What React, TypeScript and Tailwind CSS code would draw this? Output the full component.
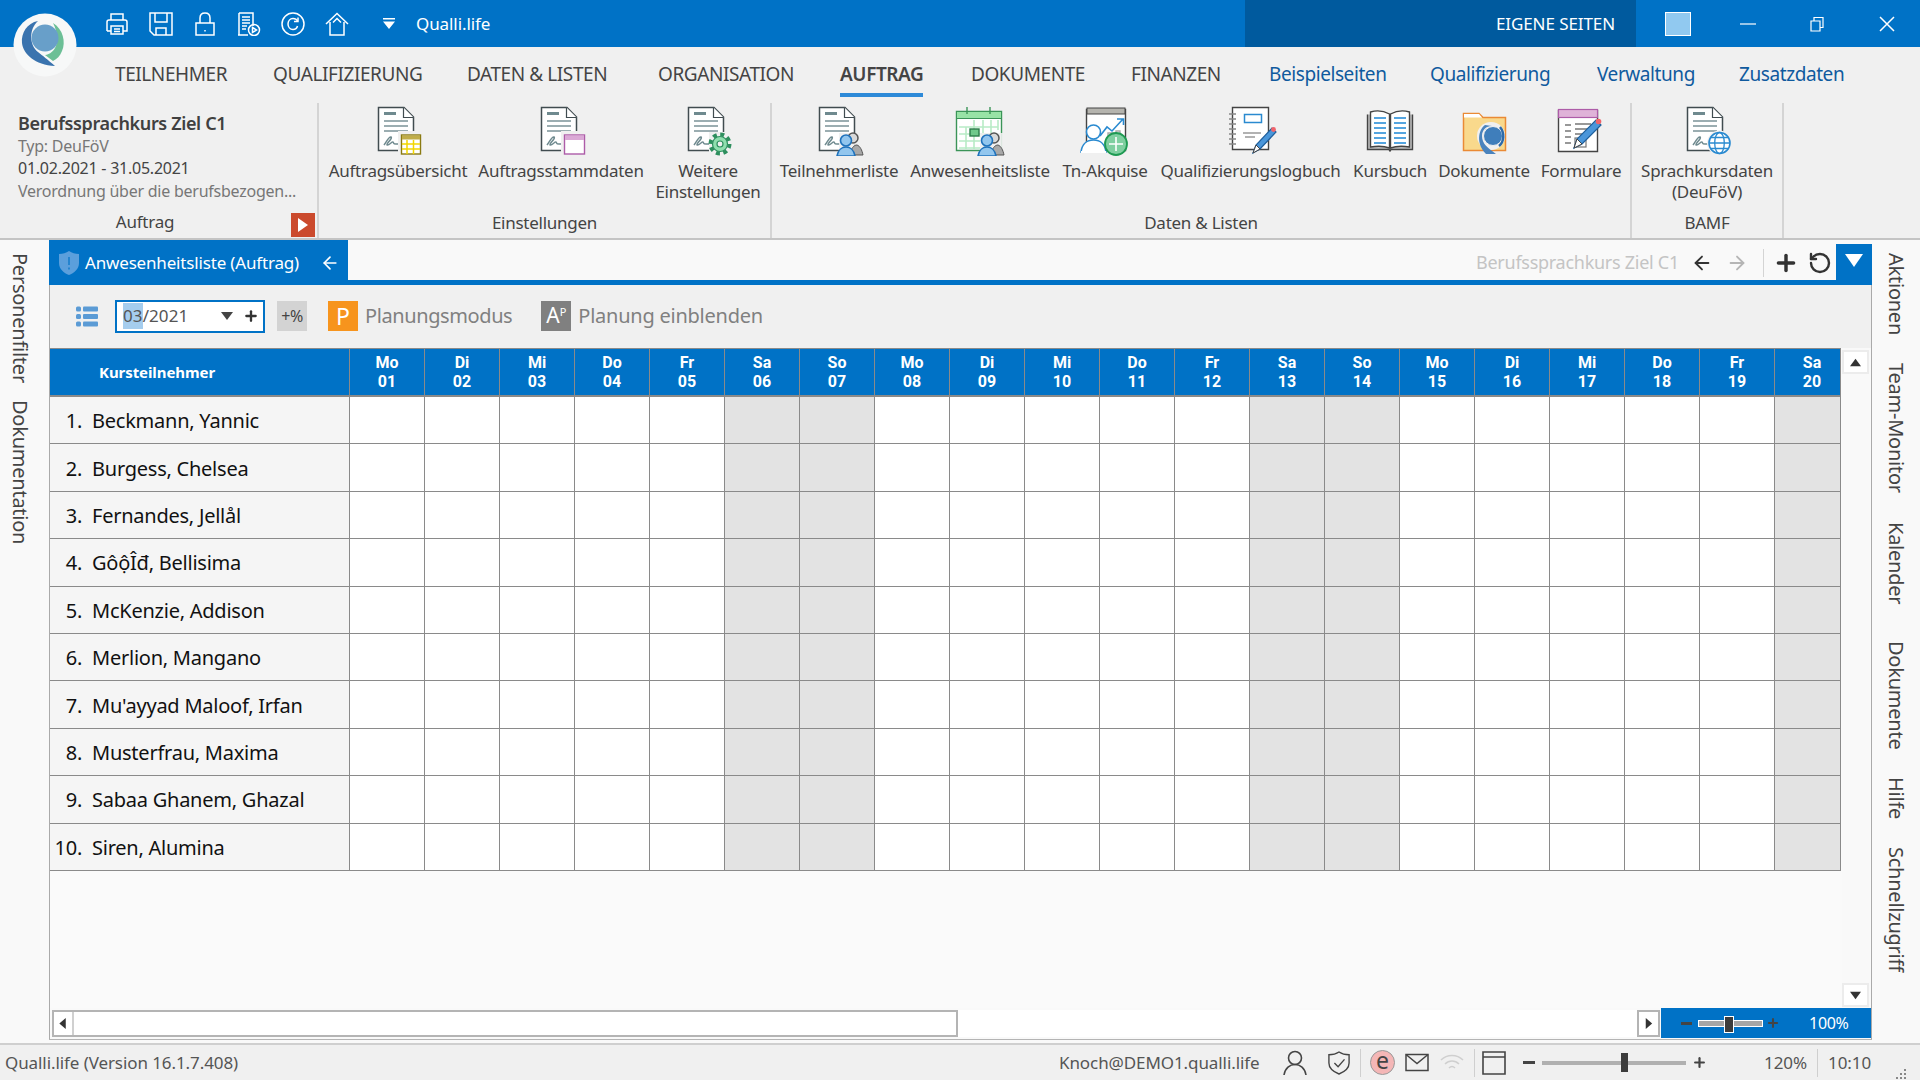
import type { ReactNode } from 'react';
import { ArrowLeft, ArrowRight, Plus, RotateCcw } from 'lucide-react';

const FONT = "font-['Noto_Sans','Open_Sans',sans-serif]";

const mainTabs = [
    { label: 'TEILNEHMER', w: 'w-[158px]' },
    { label: 'QUALIFIZIERUNG', w: 'w-[194px]' },
    { label: 'DATEN & LISTEN', w: 'w-[191px]' },
    { label: 'ORGANISATION', w: 'w-[182px]' },
    { label: 'AUFTRAG', w: 'w-[131px]', active: true },
    { label: 'DOKUMENTE', w: 'w-[160px]' },
    { label: 'FINANZEN', w: 'w-[138px]' },
    { label: 'Beispielseiten', w: 'w-[161px]', link: true },
    { label: 'Qualifizierung', w: 'w-[167px]', link: true },
    { label: 'Verwaltung', w: 'w-[142px]', link: true },
    { label: 'Zusatzdaten', w: 'w-[110px]', link: true },
];

const names = [
    'Beckmann, Yannic',
    'Burgess, Chelsea',
    'Fernandes, Jellål',
    'GôộÎđ, Bellisima',
    'McKenzie, Addison',
    'Merlion, Mangano',
    "Mu'ayyad Maloof, Irfan",
    'Musterfrau, Maxima',
    'Sabaa Ghanem, Ghazal',
    'Siren, Alumina',
];

const dayNames = ['Mo', 'Di', 'Mi', 'Do', 'Fr', 'Sa', 'So'];
const days = Array.from({ length: 20 }, (_, i) => ({
    name: dayNames[i % 7],
    num: String(i + 1).padStart(2, '0'),
    weekend: i % 7 >= 5,
}));

const leftRail = [
    { label: 'Personenfilter', h: 'h-[147px]' },
    { label: 'Dokumentation', h: 'h-[150px]' },
];

const rightRail = [
    { label: 'Aktionen', h: 'h-[110px]' },
    { label: 'Team-Monitor', h: 'h-[159px]' },
    { label: 'Kalender', h: 'h-[119px]' },
    { label: 'Dokumente', h: 'h-[136px]' },
    { label: 'Hilfe', h: 'h-[70px]' },
    { label: 'Schnellzugriff', h: 'h-[130px]' },
];

function Logo() {
    return (
        <svg viewBox="0 0 64 64" className="h-[64px] w-[64px]">
            <circle cx="32" cy="32" r="31.5" fill="#f7f8f8" />
            <path d="M25 8 C14 10 8 20 9 30 C10 41 22 52 42 53 C34 46 30 43 25 39 C17 33 15 17 25 8 Z" fill="#3a73ae" />
            <path d="M40 10 C50 16 53 29 49 38 C47 43 44 46 40 48 L32 42 C42 41 49 28 40 10 Z" fill="#6cbf96" />
            <circle cx="32" cy="25" r="13.5" fill="#689fc9" />
        </svg>
    );
}

function Doc({ children }: { children?: ReactNode }) {
    return (
        <svg viewBox="0 0 52 50" className="h-[50px] w-[52px]">
            <path d="M6.5 1.5H32L41.5 11V44.5H6.5Z" fill="#fff" stroke="#414c50" strokeWidth="1.5" />
            <path d="M31.5 1.5V11.5H41.5" fill="#fff" stroke="#414c50" strokeWidth="1.2" />
            <rect x="12" y="6" width="12" height="3" fill="#6f8a8f" />
            <path d="M12 15H36M12 20H36M12 25H36" stroke="#7b9398" strokeWidth="1.6" />
            <path d="M12 39C15 35 17 30 19 31C21 32 14 38 15 39C17 40 20 35 21 36C22 37 21 38 24 38H29" fill="none" stroke="#6f8a8f" strokeWidth="1.5" />
            {children}
        </svg>
    );
}

function People() {
    return (
        <>
            <rect x="26" y="27" width="26" height="23" fill="#f0f0f0" opacity="0.9" />
            <circle cx="40" cy="32" r="5" fill="#d9d9d9" stroke="#555" strokeWidth="1.5" />
            <path d="M37 49C38 42 41 39 44 39C47 40 49 44 50 49Z" fill="#a8a8a8" stroke="#555" strokeWidth="1" />
            <circle cx="33" cy="34.5" r="5.5" fill="#92c6ee" stroke="#1f72bc" strokeWidth="1.6" />
            <path d="M24 50C25 44 29 41 33 41C37 41 41 44 42 50Z" fill="#92c6ee" stroke="#1f72bc" strokeWidth="1.6" />
        </>
    );
}

function YellowTable() {
    return (
        <>
            <rect x="26" y="25" width="25" height="25" fill="#f0f0f0" />
            <rect x="29.5" y="29" width="19" height="19" fill="#fff" stroke="#8a7a12" strokeWidth="1.4" />
            <rect x="30" y="29.5" width="18" height="4" fill="#c0ad48" />
            <path d="M30 38H48M30 43H48M35 34V48M41.5 34V48" stroke="#f2d600" strokeWidth="1.5" />
        </>
    );
}

function PurpleWindow() {
    return (
        <>
            <rect x="26" y="25" width="25" height="25" fill="#f0f0f0" />
            <rect x="29.5" y="29" width="20" height="19" fill="#fff" stroke="#ad5ca8" strokeWidth="1.4" />
            <rect x="30" y="29.5" width="19" height="4.5" fill="#dba9d6" />
        </>
    );
}

function GearBadge() {
    return (
        <>
            <rect x="27" y="26" width="25" height="24" fill="#f0f0f0" />
            <circle cx="38" cy="38" r="9.5" fill="none" stroke="#2e8f5e" strokeWidth="4" strokeDasharray="4 3.45" />
            <circle cx="38" cy="38" r="7.5" fill="#8fdfae" stroke="#2e8f5e" strokeWidth="1.2" />
            <circle cx="38" cy="38" r="3" fill="#f0f0f0" stroke="#2e8f5e" strokeWidth="1.2" />
        </>
    );
}

function GlobeBadge() {
    return (
        <>
            <circle cx="38.5" cy="37" r="11.5" fill="#fff" stroke="#f0f0f0" strokeWidth="2" />
            <circle cx="38.5" cy="37" r="10.5" fill="#fff" stroke="#2a8ad0" strokeWidth="1.6" />
            <ellipse cx="38.5" cy="37" rx="4.8" ry="10.5" fill="none" stroke="#2a8ad0" strokeWidth="1.3" />
            <path d="M28 37H49M29.5 31.5H47.5M29.5 42.5H47.5" stroke="#2a8ad0" strokeWidth="1.3" />
        </>
    );
}

function CalendarIcon() {
    return (
        <svg viewBox="0 0 52 50" className="h-[50px] w-[52px]">
            <path d="M2.5 5.5H47.5V44.5H2.5Z" fill="#fff" stroke="#3b9458" strokeWidth="1.4" />
            <rect x="3" y="6" width="44" height="6" fill="#98e3a6" />
            <path d="M13 1V8M36 1V8" stroke="#3b9458" strokeWidth="1.4" />
            <path d="M3 12.5H47" stroke="#3b9458" strokeWidth="1.2" />
            <path d="M5 21H44M5 28H40M5 35H30M5 42H30M12 21V43M20 14V43M29 14V43M37 14V30M44 14V24" stroke="#b8ecc6" strokeWidth="1.6" />
            <rect x="16" y="23" width="9" height="7" fill="#70c98b" stroke="#2d7d4a" strokeWidth="1.4" />
            <People />
        </svg>
    );
}

function AkquiseIcon() {
    return (
        <svg viewBox="0 0 52 50" className="h-[50px] w-[52px]">
            <path d="M7.5 3.5H46.5V44.5H7.5Z" fill="#fff" stroke="#444" strokeWidth="1.4" />
            <rect x="8" y="2" width="38" height="6" fill="#b5b4ae" stroke="#444" strokeWidth="1" />
            <path d="M21 30L28 21L33 25L44 13M38 13H44.5V19" fill="none" stroke="#2a8ad0" strokeWidth="1.6" />
            <path d="M29 34V27H34V33M37 32V25H41V32" fill="none" stroke="#aaa" strokeWidth="1.4" />
            <circle cx="14.5" cy="26" r="7" fill="#fff" stroke="#2a8ad0" strokeWidth="1.6" />
            <path d="M2 46C3 38 8 34 14.5 34C21 34 26 38 27 46Z" fill="#fff" stroke="#2a8ad0" strokeWidth="1.6" />
            <path d="M2 46H27" stroke="#fff" strokeWidth="2" />
            <circle cx="37" cy="38" r="11" fill="#7fcfa0" stroke="#1e9a52" strokeWidth="1.8" />
            <path d="M37 31V45M30 38H44" stroke="#fff" strokeWidth="1.6" />
        </svg>
    );
}

function LogbookIcon() {
    return (
        <svg viewBox="0 0 52 50" className="h-[50px] w-[52px]">
            <path d="M7.5 1.5H43.5V43.5H7.5Z" fill="#fff" stroke="#444" strokeWidth="1.4" />
            <path d="M4 8H11M4 13H11M4 18H11M4 23H11M4 28H11M4 33H11M4 38H11" stroke="#888" strokeWidth="1.6" />
            <rect x="19.5" y="8.5" width="17" height="8" fill="#fff" stroke="#2a8ad0" strokeWidth="1.5" />
            <path d="M18 27H36M20 31H30" stroke="#999" strokeWidth="1.3" />
            <path d="M28 47L31 39L47 22L51 26L35 43Z" fill="#4a96da" stroke="#1f5f9c" strokeWidth="1.2" />
            <path d="M28 47L31 39L35 43Z" fill="#fff" stroke="#444" strokeWidth="1" />
            <circle cx="48.5" cy="23.5" r="2.4" fill="#f0636a" />
        </svg>
    );
}

function BookIcon() {
    return (
        <svg viewBox="0 0 52 50" className="h-[50px] w-[52px]">
            <path d="M3.5 8.5V43.5H25L26 45L27 43.5H48.5V8.5" fill="#bdbdbd" stroke="#444" strokeWidth="1.4" />
            <path d="M6.5 6C13 4 20 5 25.5 8V42C20 40 13 40 6.5 41Z" fill="#fff" stroke="#444" strokeWidth="1.4" />
            <path d="M45.5 6C39 4 32 5 26.5 8V42C32 40 39 40 45.5 41Z" fill="#fff" stroke="#444" strokeWidth="1.4" />
            <path d="M10 12H22M10 17H22M10 22H22M10 27H22M10 32H22M10 37H22M30 12H42M30 17H42M30 22H42M30 27H42M30 32H42M30 37H42" stroke="#1e88d6" strokeWidth="1.6" />
        </svg>
    );
}

function FolderIcon() {
    return (
        <svg viewBox="0 0 52 50" className="h-[50px] w-[52px]">
            <path d="M5.5 7.5H21L25 11.5H47.5V44.5H5.5Z" fill="#f9d98c" stroke="#ea8a35" strokeWidth="1.5" />
            <path d="M6 8H21L24 11.5H6Z" fill="#fff" />
            <circle cx="33" cy="30" r="14" fill="#f0f0f0" />
            <path d="M28 48L38 48C30 42 24 38 24 30C24 24 28 20 34 20L27 19C20 24 18 38 28 48Z" fill="#4a83bd" />
            <circle cx="35" cy="30" r="9.5" fill="#3f7ebb" stroke="#f0f0f0" strokeWidth="1" />
            <path d="M42 21C47 27 46 36 41 40" fill="none" stroke="#2f6ba8" strokeWidth="2.5" />
        </svg>
    );
}

function FormIcon() {
    return (
        <svg viewBox="0 0 52 50" className="h-[50px] w-[52px]">
            <path d="M3.5 4.5H42.5V45.5H3.5Z" fill="#fff" stroke="#444" strokeWidth="1.4" />
            <rect x="3.5" y="3.5" width="39" height="8" fill="#dfb2d8" stroke="#ad5ca8" strokeWidth="1.2" />
            <path d="M10 19H16M10 25H16M10 31H16M10 37H16M20 18H36M20 23H34M20 28H30" stroke="#777" strokeWidth="1.6" />
            <rect x="20" y="32" width="11" height="9" fill="none" stroke="#777" strokeWidth="1.2" />
            <path d="M19 42L22 33L41 14L46 19L27 38Z" fill="#4a96da" stroke="#1f5f9c" strokeWidth="1.2" />
            <path d="M19 42L22 33L27 38Z" fill="#fff" stroke="#444" strokeWidth="1" />
            <circle cx="43.5" cy="15.5" r="2.8" fill="#f0636a" />
        </svg>
    );
}

function RibbonButton({ icon, lines, w }: { icon: ReactNode; lines: string[]; w: string }) {
    return (
        <div className={`flex flex-col items-center ${w}`}>
            <div className="h-[50px]">{icon}</div>
            <div className="mt-[4px] text-center text-[17px] leading-[21px] tracking-[-0.015em] whitespace-nowrap text-[#444]">
                {lines.map(l => (
                    <div key={l}>{l}</div>
                ))}
            </div>
        </div>
    );
}

function RibbonGroup({ label, w, children }: { label: string; w: string; children: ReactNode }) {
    return (
        <div className={`flex flex-col border-r-2 border-[#d4d4d4] ${w}`}>
            <div className="flex h-[101px] gap-[4px] pl-[4px] pt-[3px]">{children}</div>
            <div className="mt-[8px] text-center text-[17px] leading-[21px] tracking-[-0.015em] text-[#444]">{label}</div>
        </div>
    );
}

function QuickIcons() {
    const cls = 'fill-none stroke-white stroke-[1.5]';
    return (
        <div className="flex items-center gap-[20px] pl-[105px]">
            <svg viewBox="0 0 24 24" className={`h-[24px] w-[24px] ${cls}`}>
                <path d="M6 8V2H18V8M2 19V10C2 9 3 8 4 8H20C21 8 22 9 22 10V19H18M6 19H2" />
                <path d="M6 14H18V22H6ZM9 17H15M9 19.5H15" />
            </svg>
            <svg viewBox="0 0 24 24" className={`h-[24px] w-[24px] ${cls}`}>
                <path d="M1 1H23V23H5L1 19Z" />
                <path d="M6 1V10H18V1M7 23V16H17V23" />
            </svg>
            <svg viewBox="0 0 24 24" className={`h-[24px] w-[24px] ${cls}`}>
                <path d="M3 11H21V23H3ZM7 11V6C7 3 9 1 12 1C15 1 17 3 17 6V11" />
                <path d="M12 18V19.5" />
            </svg>
            <svg viewBox="0 0 24 24" className={`h-[24px] w-[24px] ${cls}`}>
                <path d="M2 1H16V14M11 23H2V1M1 23H10" />
                <path d="M5 5H13M5 8H13M5 11H13M5 14H10M5 17H9" />
                <circle cx="17" cy="18" r="5.5" />
                <path d="M15.5 15.5L19.5 18L15.5 20.5Z" />
            </svg>
            <svg viewBox="0 0 24 24" className={`h-[24px] w-[24px] ${cls}`}>
                <circle cx="12" cy="12" r="11" />
                <path d="M16.5 9C15.5 7 14 6.5 12 6.5C9 6.5 7 9 7 12C7 15 9 17.5 12 17.5C14 17.5 16 16 16.5 14" />
                <path d="M17 5.5V9.5H13" />
            </svg>
            <svg viewBox="0 0 24 24" className={`h-[24px] w-[24px] ${cls}`}>
                <path d="M1 12L12 1.5L23 12M5 10V23H19V10" />
                <path d="M8 10.5L12 6.5L16 10.5" />
            </svg>
            <svg viewBox="0 0 14 12" className="ml-[13px] h-[12px] w-[14px] fill-white">
                <path d="M1 0H13V1.5H1ZM1 3.5H13L7 11Z" />
            </svg>
            <span className="text-[17px] tracking-[-0.005em] text-white">Qualli.life</span>
        </div>
    );
}

function TitleBar() {
    return (
        <div className="flex h-[47px] shrink-0 items-stretch bg-[#0072c6]">
            <div className="flex w-[1245px] items-center">
                <QuickIcons />
            </div>
            <div className="flex w-[391px] items-center justify-end bg-[#005a9e] pr-[21px] text-[17px] tracking-[-0.005em] text-white">
                EIGENE SEITEN
            </div>
            <div className="flex flex-1 items-center">
                <div className="ml-[29px] h-[24px] w-[26px] border border-white bg-[#91c9f0]" />
                <svg viewBox="0 0 16 16" className="ml-[49px] h-[16px] w-[16px] stroke-white stroke-[1.2]">
                    <path d="M0 8H16" />
                </svg>
                <svg viewBox="0 0 16 16" className="ml-[53px] h-[16px] w-[16px] fill-none stroke-white stroke-[1.2]">
                    <path d="M2 5H11V15H2ZM5 5V1.5H14V11.5H11" />
                </svg>
                <svg viewBox="0 0 16 16" className="ml-[54px] h-[16px] w-[16px] stroke-white stroke-[1.5]">
                    <path d="M1 1L15 15M15 1L1 15" />
                </svg>
            </div>
        </div>
    );
}

function MainTabs() {
    return (
        <div className="flex h-[49px] shrink-0 pl-[115px] pt-[14px] text-[19px] leading-[27px] tracking-[-0.022em]">
            {mainTabs.map(t => (
                <div key={t.label} className={`shrink-0 ${t.w}`}>
                    <span
                        className={`inline-block h-[36px] border-b-4 ${t.active ? 'border-[#2e8ad8] font-semibold text-[#444]' : 'border-transparent'} ${t.link ? 'text-[#0f5a9e]' : 'text-[#444]'}`}
                    >
                        {t.label}
                    </span>
                </div>
            ))}
        </div>
    );
}

function Ribbon() {
    return (
        <div className="flex h-[144px] shrink-0 items-stretch border-b-2 border-[#c4c4c4] pt-[7px]">
            <div className="relative flex w-[319px] flex-col border-r-2 border-[#d4d4d4] pl-[18px] text-[16px] leading-[22.5px] tracking-[-0.015em]">
                <div className="mt-[9px] text-[18px] font-semibold tracking-[-0.02em] text-[#404040]">Berufssprachkurs Ziel C1</div>
                <div className="text-[#777]">Typ: DeuFöV</div>
                <div className="text-[#444]">01.02.2021 - 31.05.2021</div>
                <div className="text-[#777]">Verordnung über die berufsbezogen...</div>
                <div className="mt-[9px] w-[254px] text-center text-[17px] text-[#444]">Auftrag</div>
                <div className="absolute right-[2px] bottom-[1px] flex h-[24px] w-[24px] items-center justify-center bg-[#cb4a2d]">
                    <svg viewBox="0 0 12 14" className="h-[14px] w-[12px] fill-white">
                        <path d="M1 0L11 7L1 14Z" />
                    </svg>
                </div>
            </div>
            <RibbonGroup label="Einstellungen" w="w-[453px]">
                <RibbonButton w="w-[150px]" lines={['Auftragsübersicht']} icon={<Doc><YellowTable /></Doc>} />
                <RibbonButton w="w-[168px]" lines={['Auftragsstammdaten']} icon={<Doc><PurpleWindow /></Doc>} />
                <RibbonButton w="w-[118px]" lines={['Weitere', 'Einstellungen']} icon={<Doc><GearBadge /></Doc>} />
            </RibbonGroup>
            <RibbonGroup label="Daten & Listen" w="w-[860px]">
                <RibbonButton w="w-[126px]" lines={['Teilnehmerliste']} icon={<Doc><People /></Doc>} />
                <RibbonButton w="w-[148px]" lines={['Anwesenheitsliste']} icon={<CalendarIcon />} />
                <RibbonButton w="w-[94px]" lines={['Tn-Akquise']} icon={<AkquiseIcon />} />
                <RibbonButton w="w-[189px]" lines={['Qualifizierungslogbuch']} icon={<LogbookIcon />} />
                <RibbonButton w="w-[82px]" lines={['Kursbuch']} icon={<BookIcon />} />
                <RibbonButton w="w-[98px]" lines={['Dokumente']} icon={<FolderIcon />} />
                <RibbonButton w="w-[88px]" lines={['Formulare']} icon={<FormIcon />} />
            </RibbonGroup>
            <RibbonGroup label="BAMF" w="w-[152px]">
                <RibbonButton w="w-[142px]" lines={['Sprachkursdaten', '(DeuFöV)']} icon={<Doc><GlobeBadge /></Doc>} />
            </RibbonGroup>
        </div>
    );
}

function Rail({ items }: { items: { label: string; h: string }[] }) {
    return (
        <div className="flex shrink-0 flex-col items-center pt-[13px] text-[20px] leading-[24px] tracking-[-0.012em] text-[#444]">
            {items.map(i => (
                <div key={i.label} className={`[writing-mode:vertical-rl] ${i.h}`}>
                    {i.label}
                </div>
            ))}
        </div>
    );
}

function TabBar() {
    return (
        <div className="flex h-[45px] shrink-0 border-b-[5px] border-[#0072c6]">
            <div className="flex h-[40px] w-[299px] items-center self-end bg-[#0072c6] pl-[10px] pt-[5px] text-[17px] tracking-[-0.01em] text-white">
                <svg viewBox="0 0 20 24" className="mr-[6px] h-[24px] w-[20px]">
                    <path d="M10 0C13 2 16 3 20 3V12C20 18 15 22 10 24C5 22 0 18 0 12V3C4 3 7 2 10 0Z" fill="#5b9fdc" />
                    <path d="M10 6V14M10 16.5V18.5" stroke="#0072c6" strokeWidth="1.2" />
                </svg>
                <span>Anwesenheitsliste (Auftrag)</span>
                <ArrowLeft className="ml-[21px] h-[20px] w-[20px]" strokeWidth={2} />
            </div>
            <div className="flex flex-1 items-center justify-end pt-[5px]">
                <span className="text-[18px] tracking-[-0.015em] text-[#c4c4c4]">Berufssprachkurs Ziel C1</span>
                <ArrowLeft className="ml-[12px] h-[22px] w-[22px] text-[#333]" strokeWidth={2} />
                <ArrowRight className="ml-[13px] h-[22px] w-[22px] text-[#b5b5b5]" strokeWidth={2} />
                <div className="ml-[15px] h-[28px] w-px bg-[#d4d4d4]" />
                <Plus className="ml-[9px] h-[26px] w-[26px] text-[#333]" strokeWidth={3.2} />
                <RotateCcw className="ml-[9px] h-[24px] w-[24px] text-[#333]" strokeWidth={2.4} />
                <div className="ml-[4px] flex h-[36px] w-[36px] items-start justify-center self-end bg-[#0072c6] pt-[10px]">
                    <svg viewBox="0 0 18 14" className="h-[14px] w-[18px] fill-white">
                        <path d="M0 0H18L9 13Z" />
                    </svg>
                </div>
            </div>
        </div>
    );
}

function Toolbar() {
    return (
        <div className="flex h-[63px] shrink-0 items-center bg-[#f0f0f0] pb-[1px]">
            <svg viewBox="0 0 22 20" className="ml-[26px] h-[21px] w-[22px] fill-[#5b9bd5]">
                <rect x="0" y="0" width="5" height="5" rx="1.5" />
                <rect x="7" y="0" width="15" height="5" rx="1" />
                <rect x="0" y="7.5" width="5" height="5" rx="1.5" />
                <rect x="7" y="7.5" width="15" height="5" rx="1" />
                <rect x="0" y="15" width="5" height="5" rx="1.5" />
                <rect x="7" y="15" width="15" height="5" rx="1" />
            </svg>
            <div className="ml-[17px] flex h-[33px] w-[150px] items-center border-2 border-[#0072c6] bg-white pl-[6px] text-[17px] tracking-[0.005em] text-[#555]">
                <span className="bg-[#a5cdee]">03</span>
                <span>/2021</span>
                <svg viewBox="0 0 12 8" className="ml-[33px] h-[8px] w-[12px] fill-[#444]">
                    <path d="M0 0H12L6 8Z" />
                </svg>
                <Plus className="ml-[10px] h-[16px] w-[16px] text-[#333]" strokeWidth={3.5} />
            </div>
            <div className="ml-[12px] flex h-[30px] w-[30px] items-center justify-center bg-[#d3d3d3] text-[16px] tracking-[-0.03em] text-[#444]">
                +%
            </div>
            <div className="ml-[21px] flex h-[30px] w-[30px] items-center justify-center bg-[#f7941d] text-[23px] text-white">P</div>
            <span className="ml-[7px] text-[20px] tracking-[-0.02em] text-[#808080]">Planungsmodus</span>
            <div className="ml-[29px] flex h-[30px] w-[30px] items-center justify-center bg-[#808080] text-[21px] text-white">
                A<span className="mb-[8px] text-[11px]">P</span>
            </div>
            <span className="ml-[7px] text-[20px] tracking-[-0.012em] text-[#808080]">Planung einblenden</span>
        </div>
    );
}

function DayTable() {
    return (
        <div className="grid grid-cols-[300px_repeat(19,75px)_66px] text-[#111]">
            <div className="flex h-[49px] items-center border-t border-r border-b-2 border-[#8a8a8a] bg-[#0072c6] pl-[49px] text-[15px] font-bold tracking-[-0.005em] text-white">
                Kursteilnehmer
            </div>
            {days.map((d, i) => (
                <div
                    key={d.num}
                    className={`flex h-[49px] flex-col items-center justify-center border-t border-r border-b-2 border-[#8a8a8a] bg-[#0072c6] font-['Roboto',sans-serif] text-[16px] leading-[19px] font-bold text-white ${i === 19 ? 'pl-[9px]' : ''}`}
                >
                    <span>{d.name}</span>
                    <span>{d.num}</span>
                </div>
            ))}
            {names.map((name, i) => (
                <Row key={name} index={i + 1} name={name} />
            ))}
        </div>
    );
}

function Row({ index, name }: { index: number; name: string }) {
    return (
        <>
            <div className="flex h-[47.4px] items-center border-r border-b border-[#8a8a8a] bg-[#f5f5f5] pt-[2px] text-[20px] tracking-[-0.012em]">
                <span className="w-[32px] text-right">{index}.</span>
                <span className="ml-[10px]">{name}</span>
            </div>
            {days.map(d => (
                <div key={d.num} className={`h-[47.4px] border-r border-b border-[#8a8a8a] ${d.weekend ? 'bg-[#e3e3e3]' : 'bg-white'}`} />
            ))}
        </>
    );
}

function ScrollBox({ d, className }: { d: string; className: string }) {
    return (
        <div className={`flex items-center justify-center border-2 bg-white ${className}`}>
            <svg viewBox="0 0 12 12" className="h-[11px] w-[11px] fill-[#333]">
                <path d={d} />
            </svg>
        </div>
    );
}

function BottomBar() {
    return (
        <div className="flex h-[31px] shrink-0 items-start">
            <div className="mt-[2px] ml-[2px] flex h-[27px] w-[906px] border-2 border-[#b4b4b4] bg-white">
                <div className="flex w-[20px] items-center justify-center border-r-2 border-[#d0d0d0]">
                    <svg viewBox="0 0 8 12" className="h-[11px] w-[8px] fill-[#333]">
                        <path d="M7 0V12L0 6Z" />
                    </svg>
                </div>
            </div>
            <div className="mt-[2px] h-[27px] w-[680px] bg-white" />
            <ScrollBox d="M3 0L10 6L3 12Z" className="mt-[2px] h-[27px] w-[23px] border-[#b4b4b4]" />
            <div className="ml-[1px] flex h-[30px] w-[210px] items-center bg-[#0072c6] pl-[20px] text-[16px] tracking-[-0.02em] text-white">
                <div className="h-[3px] w-[11px] bg-[#444]" />
                <div className="relative ml-[6px] h-[7px] w-[65px] border border-white bg-[#a6a6a6]">
                    <div className="absolute -top-[5px] left-[25px] h-[17px] w-[10px] border border-white bg-[#3c3c3c]" />
                </div>
                <Plus className="ml-[3px] h-[14px] w-[14px] text-[#444]" strokeWidth={3.5} />
                <span className="ml-[29px]">100%</span>
            </div>
        </div>
    );
}

function StatusIcons() {
    return (
        <>
            <svg viewBox="0 0 24 26" className="h-[26px] w-[24px] fill-none stroke-[#444] stroke-[1.6]">
                <circle cx="12" cy="8" r="6.5" />
                <path d="M1 25C2 18 7 14.5 12 14.5C17 14.5 22 18 23 25" />
            </svg>
            <svg viewBox="0 0 24 26" className="ml-[21px] h-[26px] w-[22px] fill-none stroke-[#444] stroke-[1.5]">
                <path d="M12 1C15 3 19 4 23 4V13C23 19 17 23 12 25C7 23 1 19 1 13V4C5 4 9 3 12 1Z" />
                <path d="M7 13L11 17L18 9" />
            </svg>
            <div className="ml-[10px] h-[28px] w-px bg-[#cfcfcf]" />
            <div className="ml-[9px] flex h-[25px] w-[25px] items-center justify-center rounded-full border border-[#999] bg-[#f4b6b6] pb-[4px] text-[23px] leading-none text-[#444]">
                e
            </div>
            <svg viewBox="0 0 24 18" className="ml-[10px] h-[19px] w-[24px] fill-none stroke-[#444] stroke-[1.5]">
                <path d="M1 1H23V17H1Z" />
                <path d="M1 1L12 10L23 1" />
            </svg>
            <svg viewBox="0 0 24 18" className="ml-[11px] h-[18px] w-[24px] fill-none stroke-[#cfcfcf] stroke-[1.5]">
                <path d="M1 6C7 0 17 0 23 6M5 10C9 6 15 6 19 10M9 14C11 12 13 12 15 14" />
            </svg>
            <div className="ml-[10px] h-[28px] w-px bg-[#cfcfcf]" />
            <svg viewBox="0 0 24 24" className="ml-[7px] h-[24px] w-[24px] fill-none stroke-[#444] stroke-[1.6]">
                <path d="M1 1H23V23H1ZM1 6H23" />
            </svg>
            <div className="ml-[17px] h-[3px] w-[12px] bg-[#444]" />
            <div className="relative ml-[7px] h-[4px] w-[144px] bg-[#b0b0b0]">
                <div className="absolute -top-[8px] left-[79px] h-[19px] w-[7px] bg-[#3c3c3c]" />
            </div>
            <Plus className="ml-[6px] h-[15px] w-[15px] text-[#444]" strokeWidth={3.5} />
        </>
    );
}

function StatusBar() {
    return (
        <div className="flex h-[37px] shrink-0 items-center border-t-2 border-[#cfcfcf] bg-[#f0f0f0] pl-[5px] text-[17px] tracking-[-0.005em] text-[#555]">
            <span className="w-[1054px] whitespace-nowrap">Qualli.life (Version 16.1.7.408)</span>
            <span className="w-[224px] whitespace-nowrap">Knoch@DEMO1.qualli.life</span>
            <StatusIcons />
            <span className="ml-[57px] w-[46px]">120%</span>
            <div className="ml-[7px] h-[28px] w-px bg-[#cfcfcf]" />
            <span className="ml-[10px]">10:10</span>
            <svg viewBox="0 0 12 12" className="ml-[24px] h-[12px] w-[12px] self-end fill-[#888]">
                <path d="M9 1H11V3H9ZM5 5H7V7H5ZM9 5H11V7H9ZM1 9H3V11H1ZM5 9H7V11H5ZM9 9H11V11H9Z" />
            </svg>
        </div>
    );
}

export default function App() {
    return (
        <div className={`relative flex h-[1080px] w-[1920px] flex-col overflow-hidden bg-[#f0f0f0] ${FONT}`}>
            <TitleBar />
            <MainTabs />
            <Ribbon />
            <div className="flex h-[803px] shrink-0 bg-[#f9f9f9]">
                <div className="mr-[9px] w-[40px] shrink-0">
                    <Rail items={leftRail} />
                </div>
                <div className="flex h-[800px] w-[1823px] shrink-0 flex-col border-b border-[#b4b4b4]">
                    <TabBar />
                    <div className="flex min-h-0 flex-1 flex-col border-x border-[#aaa]">
                        <Toolbar />
                        <div className="flex h-[660px] shrink-0">
                            <div className="w-[1792px] shrink-0 bg-[#fafafa]">
                                <DayTable />
                            </div>
                            <div className="flex flex-1 flex-col justify-between bg-[#f9f9f9] pt-[2px] pb-[1px]">
                                <ScrollBox d="M6 2L12 10H0Z" className="h-[24px] w-[27px] border-[#ececec]" />
                                <ScrollBox d="M6 10L12 2H0Z" className="h-[24px] w-[27px] border-[#ececec]" />
                            </div>
                        </div>
                        <BottomBar />
                    </div>
                </div>
                <div className="flex-1">
                    <Rail items={rightRail} />
                </div>
            </div>
            <StatusBar />
            <div className="absolute top-[13px] left-[13px]">
                <Logo />
            </div>
        </div>
    );
}
